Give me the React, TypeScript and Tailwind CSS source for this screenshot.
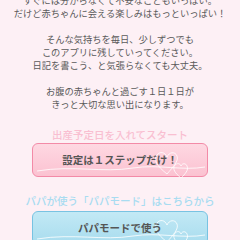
const jp = { fontFamily: '"Noto Sans CJK JP", "Noto Sans", sans-serif' };

function Hearts({ stroke }: { stroke: string }) {
  return (
    <svg className="absolute right-[10px] top-[4px]" width="48" height="30" viewBox="0 0 48 30" fill="none">
      <path d="M18 26 C8 18 4 12 8 7 C11 3 16 4 18 9 C20 4 26 3 28 8 C30 13 24 19 18 26 Z" stroke={stroke} strokeWidth="0.8" />
      <path d="M32 30 C26 25 23 21 26 17 C28 15 31 15 32 18 C33 15 37 15 38 18 C40 22 36 26 32 30 Z" stroke={stroke} strokeWidth="0.8" />
    </svg>
  );
}

function Wave({ stroke }: { stroke: string }) {
  return (
    <svg className="absolute left-0 bottom-[3px]" width="176" height="10" viewBox="0 0 176 10" fill="none">
      <path d="M4 8 C40 2 70 10 100 5 C125 1 150 8 172 4" stroke={stroke} strokeWidth="0.8" />
    </svg>
  );
}

export default function App() {
  return (
    <div className="w-[240px] h-[240px] overflow-hidden bg-[#fdf0f5]" style={jp}>
      <div className="-mt-[6px] flex flex-col items-center text-[9.25px] leading-[13px] text-[#5a5a5a]">
        <p>すぐには分からなくて不安なこともいっぱい。</p>
        <p>だけど赤ちゃんに会える楽しみはもっといっぱい！</p>
        <p>&nbsp;</p>
        <p>そんな気持ちを毎日、少しずつでも</p>
        <p>このアプリに残していってください。</p>
        <p>日記を書こう、と気張らなくても大丈夫。</p>
        <p>&nbsp;</p>
        <p>お腹の赤ちゃんと過ごす１日１日が</p>
        <p>きっと大切な思い出になります。</p>
      </div>

      <p className="mt-[17px] text-center text-[10.5px] leading-[14px] font-medium text-[#f9bfd1]">
        出産予定日を入れてスタート
      </p>
      <div className="mx-auto mt-[1px] relative w-[176px] h-[34px] rounded-[6px] border-[1.5px] border-[#f38aa7] bg-gradient-to-b from-[#fed8e2] to-[#fbc2d1] flex items-center justify-center">
        <Hearts stroke="#ffffff" />
        <Wave stroke="#ffffff" />
        <span className="relative text-[10.5px] font-bold text-[#555555]">設定は１ステップだけ！</span>
      </div>

      <p className="mt-[17px] text-center text-[10.5px] leading-[14px] font-medium text-[#a8dcf1]">
        パパが使う「パパモード」はこちらから
      </p>
      <div className="mx-auto mt-[3px] relative w-[176px] h-[34px] rounded-[6px] border-[1.5px] border-[#78c3e2] bg-gradient-to-b from-[#c2e9f5] to-[#a8dcee] flex items-center justify-center">
        <Hearts stroke="#ffffff" />
        <Wave stroke="#ffffff" />
        <span className="relative text-[10.5px] font-bold text-[#555555]">パパモードで使う</span>
      </div>
    </div>
  );
}
